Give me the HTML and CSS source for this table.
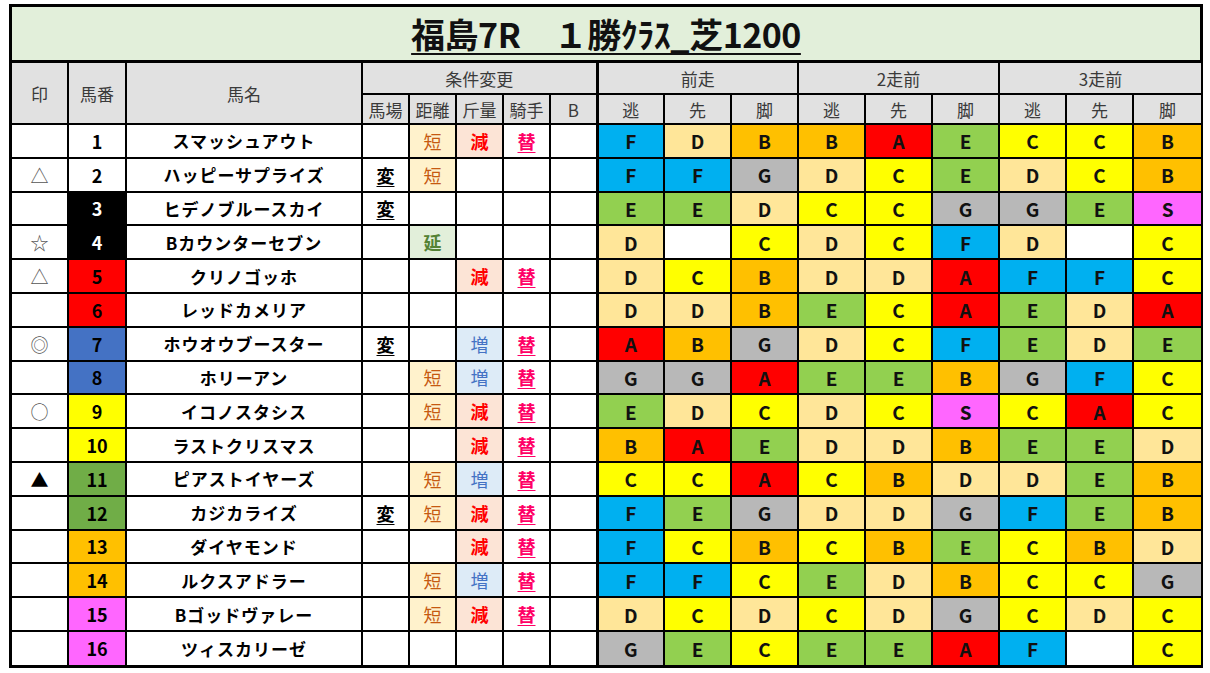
FILE: index.html
```html
<!DOCTYPE html>
<html lang="ja">
<head>
<meta charset="utf-8">
<title>福島7R 1勝クラス 芝1200</title>
<link rel="stylesheet" href="styles.css">
</head>
<body>
<div class="sheet">
  <div class="title"><span class="title-text">福島7R　１勝ｸﾗｽ_芝1200</span></div>
  <table class="grid">
    <colgroup>
      <col class="w-mark"><col class="w-num"><col class="w-name">
      <col class="w-cond"><col class="w-cond"><col class="w-cond"><col class="w-cond"><col class="w-cond">
      <col class="w-g"><col class="w-g"><col class="w-g"><col class="w-g"><col class="w-g"><col class="w-g"><col class="w-g"><col class="w-g"><col class="w-g9">
    </colgroup>
    <thead>
      <tr class="h1">
        <th rowspan="2">印</th>
        <th rowspan="2">馬番</th>
        <th rowspan="2">馬名</th>
        <th colspan="5" class="grp-start">条件変更</th>
        <th colspan="3" class="sep">前走</th>
        <th colspan="3">2走前</th>
        <th colspan="3">3走前</th>
      </tr>
      <tr class="h2">
        <th class="grp-start">馬場</th><th class="nl">距離</th><th class="nl nr">斤量</th><th class="nr">騎手</th><th>B</th>
        <th class="sep">逃</th><th class="thin">先</th><th class="thin">脚</th>
        <th>逃</th><th class="thin">先</th><th class="thin">脚</th>
        <th>逃</th><th class="thin">先</th><th class="thin">脚</th>
      </tr>
    </thead>
    <tbody>
      <tr><td class="mk"></td><td class="num n1">1</td><td class="name">スマッシュアウト</td><td></td><td class="tan">短</td><td class="gen">減</td><td class="kae">替</td><td></td><td class="sep g gF">F</td><td class="g gD">D</td><td class="g gB">B</td><td class="g gB">B</td><td class="g gA">A</td><td class="g gE">E</td><td class="g gC">C</td><td class="g gC">C</td><td class="g gB">B</td></tr>
      <tr><td class="mk">△</td><td class="num n1">2</td><td class="name">ハッピーサプライズ</td><td class="hen">変</td><td class="tan">短</td><td></td><td></td><td></td><td class="sep g gF">F</td><td class="g gF">F</td><td class="g gG">G</td><td class="g gD">D</td><td class="g gC">C</td><td class="g gE">E</td><td class="g gD">D</td><td class="g gC">C</td><td class="g gB">B</td></tr>
      <tr><td class="mk"></td><td class="num n2">3</td><td class="name">ヒデノブルースカイ</td><td class="hen">変</td><td></td><td></td><td></td><td></td><td class="sep g gE">E</td><td class="g gE">E</td><td class="g gD">D</td><td class="g gC">C</td><td class="g gC">C</td><td class="g gG">G</td><td class="g gG">G</td><td class="g gE">E</td><td class="g gS">S</td></tr>
      <tr><td class="mk">☆</td><td class="num n2">4</td><td class="name">Bカウンターセブン</td><td></td><td class="en">延</td><td></td><td></td><td></td><td class="sep g gD">D</td><td class="g"></td><td class="g gC">C</td><td class="g gD">D</td><td class="g gC">C</td><td class="g gF">F</td><td class="g gD">D</td><td class="g"></td><td class="g gC">C</td></tr>
      <tr><td class="mk">△</td><td class="num n3">5</td><td class="name">クリノゴッホ</td><td></td><td></td><td class="gen">減</td><td class="kae">替</td><td></td><td class="sep g gD">D</td><td class="g gC">C</td><td class="g gB">B</td><td class="g gD">D</td><td class="g gD">D</td><td class="g gA">A</td><td class="g gF">F</td><td class="g gF">F</td><td class="g gC">C</td></tr>
      <tr><td class="mk"></td><td class="num n3">6</td><td class="name">レッドカメリア</td><td></td><td></td><td></td><td></td><td></td><td class="sep g gD">D</td><td class="g gD">D</td><td class="g gB">B</td><td class="g gE">E</td><td class="g gC">C</td><td class="g gA">A</td><td class="g gE">E</td><td class="g gD">D</td><td class="g gA">A</td></tr>
      <tr><td class="mk">◎</td><td class="num n4">7</td><td class="name">ホウオウブースター</td><td class="hen">変</td><td></td><td class="zo">増</td><td class="kae">替</td><td></td><td class="sep g gA">A</td><td class="g gB">B</td><td class="g gG">G</td><td class="g gD">D</td><td class="g gC">C</td><td class="g gF">F</td><td class="g gE">E</td><td class="g gD">D</td><td class="g gE">E</td></tr>
      <tr><td class="mk"></td><td class="num n4">8</td><td class="name">ホリーアン</td><td></td><td class="tan">短</td><td class="zo">増</td><td class="kae">替</td><td></td><td class="sep g gG">G</td><td class="g gG">G</td><td class="g gA">A</td><td class="g gE">E</td><td class="g gE">E</td><td class="g gB">B</td><td class="g gG">G</td><td class="g gF">F</td><td class="g gC">C</td></tr>
      <tr><td class="mk">○</td><td class="num n5">9</td><td class="name">イコノスタシス</td><td></td><td class="tan">短</td><td class="gen">減</td><td class="kae">替</td><td></td><td class="sep g gE">E</td><td class="g gD">D</td><td class="g gC">C</td><td class="g gD">D</td><td class="g gC">C</td><td class="g gS">S</td><td class="g gC">C</td><td class="g gA">A</td><td class="g gC">C</td></tr>
      <tr><td class="mk"></td><td class="num n5">10</td><td class="name">ラストクリスマス</td><td></td><td></td><td class="gen">減</td><td class="kae">替</td><td></td><td class="sep g gB">B</td><td class="g gA">A</td><td class="g gE">E</td><td class="g gD">D</td><td class="g gD">D</td><td class="g gB">B</td><td class="g gE">E</td><td class="g gE">E</td><td class="g gD">D</td></tr>
      <tr><td class="mk black">▲</td><td class="num n6">11</td><td class="name">ピアストイヤーズ</td><td></td><td class="tan">短</td><td class="zo">増</td><td class="kae">替</td><td></td><td class="sep g gC">C</td><td class="g gC">C</td><td class="g gA">A</td><td class="g gC">C</td><td class="g gB">B</td><td class="g gD">D</td><td class="g gD">D</td><td class="g gE">E</td><td class="g gB">B</td></tr>
      <tr><td class="mk"></td><td class="num n6">12</td><td class="name">カジカライズ</td><td class="hen">変</td><td class="tan">短</td><td class="gen">減</td><td class="kae">替</td><td></td><td class="sep g gF">F</td><td class="g gE">E</td><td class="g gG">G</td><td class="g gD">D</td><td class="g gD">D</td><td class="g gG">G</td><td class="g gF">F</td><td class="g gE">E</td><td class="g gB">B</td></tr>
      <tr><td class="mk"></td><td class="num n7">13</td><td class="name">ダイヤモンド</td><td></td><td></td><td class="gen">減</td><td class="kae">替</td><td></td><td class="sep g gF">F</td><td class="g gC">C</td><td class="g gB">B</td><td class="g gC">C</td><td class="g gB">B</td><td class="g gE">E</td><td class="g gC">C</td><td class="g gB">B</td><td class="g gD">D</td></tr>
      <tr><td class="mk"></td><td class="num n7">14</td><td class="name">ルクスアドラー</td><td></td><td class="tan">短</td><td class="zo">増</td><td class="kae">替</td><td></td><td class="sep g gF">F</td><td class="g gF">F</td><td class="g gC">C</td><td class="g gE">E</td><td class="g gD">D</td><td class="g gB">B</td><td class="g gC">C</td><td class="g gC">C</td><td class="g gG">G</td></tr>
      <tr><td class="mk"></td><td class="num n8">15</td><td class="name">Bゴッドヴァレー</td><td></td><td class="tan">短</td><td class="gen">減</td><td class="kae">替</td><td></td><td class="sep g gD">D</td><td class="g gC">C</td><td class="g gD">D</td><td class="g gC">C</td><td class="g gD">D</td><td class="g gG">G</td><td class="g gC">C</td><td class="g gD">D</td><td class="g gC">C</td></tr>
      <tr><td class="mk"></td><td class="num n8">16</td><td class="name">ツィスカリーゼ</td><td></td><td></td><td></td><td></td><td></td><td class="sep g gG">G</td><td class="g gE">E</td><td class="g gC">C</td><td class="g gE">E</td><td class="g gE">E</td><td class="g gA">A</td><td class="g gF">F</td><td class="g"></td><td class="g gC">C</td></tr>
    </tbody>
  </table>
</div>
</body>
</html>
```

FILE: styles.css
```css
html, body {
  margin: 0;
  padding: 0;
  background: #ffffff;
}
body {
  padding: 4px 0 0 9px;
  font-family: "Noto Sans CJK JP", "Noto Sans", sans-serif;
  color: #000;
}
.sheet {
  width: 1188px;
  border: 3px solid #000;
}
.title {
  height: 53px;
  background: #e2efda;
  border-bottom: 3px solid #000;
  display: flex;
  align-items: center;
  justify-content: center;
}
.title-text {
  font-size: 34px;
  font-weight: 700;
  line-height: 1;
  color: #111;
  text-decoration: underline;
  text-decoration-thickness: 2px;
  text-underline-offset: 5px;
  letter-spacing: -0.5px;
}
.grid {
  width: 1188px;
  table-layout: fixed;
  border-collapse: collapse;
  border-style: hidden;
}
.w-mark { width: 56px; }
.w-num { width: 58px; }
.w-name { width: 236px; }
.w-cond { width: 47px; }
.w-g { width: 67px; }
.w-g9 { width: 68px; }

th {
  background: #e1e1e1;
  color: #3a3a3a;
  font-weight: 400;
  font-size: 17px;
  padding: 0;
  border: 2px solid #000;
  text-align: center;
  line-height: 1;
}
.h1 { height: 31px; }
.h2 { height: 30px; }
.h2 th { border-top-width: 1.5px; }
th.nl { border-left: none; }
th.nr { border-right: none; }
th.thin { border-left-width: 1px; }
th.sep, td.sep { border-left-width: 3px; }
th.grp-start { border-left-width: 2px; }

td {
  border: 2px solid #000;
  padding: 0;
  text-align: center;
  line-height: 1;
  height: 31.8px;
  font-size: 17px;
}
tbody tr { height: 33.8px; }

.mk {
  color: #555;
  font-size: 18px;
}
.mk.black { color: #000; }

.num {
  font-weight: 700;
  font-size: 18px;
}
.n1 { background: #fff; color: #000; }
.n2 { background: #000; color: #fff; }
.n3 { background: #ff0000; color: #000; }
.n4 { background: #4472c4; color: #000; }
.n5 { background: #ffff00; color: #000; }
.n6 { background: #70ad47; color: #000; }
.n7 { background: #ffc000; color: #000; }
.n8 { background: #ff66ff; color: #000; }

.name {
  font-weight: 700;
  font-size: 17px;
  letter-spacing: 1px;
}

.tan { background: #fff2cc; color: #c65911; font-size: 18px; }
.gen { background: #fce4d6; color: #ff0000; font-weight: 700; font-size: 18px; }
.zo { background: #ddebf7; color: #4472c4; font-size: 18px; }
.en { background: #e2efda; color: #548235; font-weight: 700; font-size: 18px; }
.kae {
  color: #ff0066;
  font-weight: 700;
  font-size: 18px;
  text-decoration: underline;
  text-underline-offset: 3px;
}
.hen {
  font-weight: 700;
  font-size: 18px;
  text-decoration: underline;
  text-underline-offset: 3px;
}

.g {
  font-weight: 700;
  font-size: 19px;
  color: #111;
}
.gA { background: #ff0000; }
.gB { background: #ffc000; }
.gC { background: #ffff00; }
.gD { background: #ffe699; }
.gE { background: #92d050; }
.gF { background: #00b0f0; }
.gG { background: #b8b8b8; }
.gS { background: #ff66ff; }
```
